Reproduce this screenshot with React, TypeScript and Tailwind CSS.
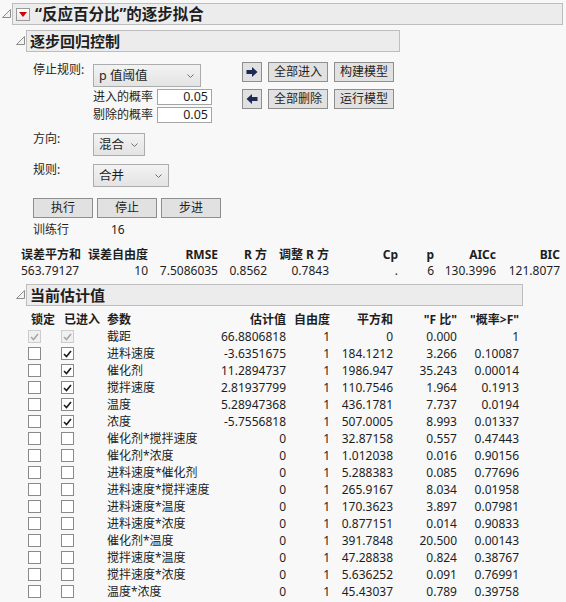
import React from 'react';

type Row = {
  name: string;
  est: string;
  df: string;
  ss: string;
  f: string;
  p: string;
  entered: boolean;
  disabled?: boolean;
};

const rows: Row[] = [
  { name: '截距', est: '66.8806818', df: '1', ss: '0', f: '0.000', p: '1', entered: true, disabled: true },
  { name: '进料速度', est: '-3.6351675', df: '1', ss: '184.1212', f: '3.266', p: '0.10087', entered: true },
  { name: '催化剂', est: '11.2894737', df: '1', ss: '1986.947', f: '35.243', p: '0.00014', entered: true },
  { name: '搅拌速度', est: '2.81937799', df: '1', ss: '110.7546', f: '1.964', p: '0.1913', entered: true },
  { name: '温度', est: '5.28947368', df: '1', ss: '436.1781', f: '7.737', p: '0.0194', entered: true },
  { name: '浓度', est: '-5.7556818', df: '1', ss: '507.0005', f: '8.993', p: '0.01337', entered: true },
  { name: '催化剂*搅拌速度', est: '0', df: '1', ss: '32.87158', f: '0.557', p: '0.47443', entered: false },
  { name: '催化剂*浓度', est: '0', df: '1', ss: '1.012038', f: '0.016', p: '0.90156', entered: false },
  { name: '进料速度*催化剂', est: '0', df: '1', ss: '5.288383', f: '0.085', p: '0.77696', entered: false },
  { name: '进料速度*搅拌速度', est: '0', df: '1', ss: '265.9167', f: '8.034', p: '0.01958', entered: false },
  { name: '进料速度*温度', est: '0', df: '1', ss: '170.3623', f: '3.897', p: '0.07981', entered: false },
  { name: '进料速度*浓度', est: '0', df: '1', ss: '0.877151', f: '0.014', p: '0.90833', entered: false },
  { name: '催化剂*温度', est: '0', df: '1', ss: '391.7848', f: '20.500', p: '0.00143', entered: false },
  { name: '搅拌速度*温度', est: '0', df: '1', ss: '47.28838', f: '0.824', p: '0.38767', entered: false },
  { name: '搅拌速度*浓度', est: '0', df: '1', ss: '5.636252', f: '0.091', p: '0.76991', entered: false },
  { name: '温度*浓度', est: '0', df: '1', ss: '45.43037', f: '0.789', p: '0.39758', entered: false },
];

const statHeads = ['误差平方和', '误差自由度', 'RMSE', 'R 方', '调整 R 方', 'Cp', 'p', 'AICc', 'BIC'];
const statVals = ['563.79127', '10', '7.5086035', '0.8562', '0.7843', '.', '6', '130.3996', '121.8077'];

const Disclosure = () => (
  <svg width="9" height="9" viewBox="0 0 9 9" className="shrink-0">
    <path d="M8.5 0.5 V8.5 H0.5 Z" fill="#f2f2f2" stroke="#8c8c8c" strokeWidth="1" />
  </svg>
);

const Chevron = () => (
  <svg width="7" height="4" viewBox="0 0 7 4">
    <path d="M0.5 0.5 L3.5 3.5 L6.5 0.5" fill="none" stroke="#707070" strokeWidth="1" />
  </svg>
);

const Dropdown = ({ text, className }: { text: string; className: string }) => (
  <div
    className={`flex h-[23px] items-center justify-between border border-[#acacac] bg-linear-to-b from-[#f3f3f3] to-[#e3e3e3] pl-[5px] pr-[6px] text-[12.5px] ${className}`}
  >
    <span>{text}</span>
    <Chevron />
  </div>
);

const Btn = ({ children, className = 'w-[60px]' }: { children: React.ReactNode; className?: string }) => (
  <button className={`flex h-[20px] items-center justify-center border border-[#8e8e8e] bg-[#e1e1e1] text-[12px] leading-none ${className}`}>
    {children}
  </button>
);

const Arrow = ({ left }: { left?: boolean }) => (
  <svg width="12" height="10" viewBox="0 0 12 10" className={left ? 'rotate-180' : ''}>
    <path d="M0.5 3 H6 V0 L11.5 5 L6 10 V7 H0.5 Z" fill="#1b2b55" />
  </svg>
);

const Check = ({ checked, disabled }: { checked: boolean; disabled?: boolean }) => (
  <div
    className={`flex h-[13px] w-[13px] items-center justify-center border ${
      disabled ? 'border-[#cccccc] bg-[#f0f0f0]' : 'border-[#8a8a8a] bg-white'
    }`}
  >
    {checked && (
      <svg width="9" height="8" viewBox="0 0 9 8">
        <path
          d="M1 4 L3.5 6.5 L8 1"
          fill="none"
          stroke={disabled ? '#a6a6a6' : '#1a1a1a'}
          strokeWidth="1.6"
        />
      </svg>
    )}
  </div>
);

export default function App() {
  return (
    <div className="h-[602px] w-[566px] overflow-hidden bg-[#f8f8f8] font-['Noto_Sans','Noto_Sans_CJK_SC',sans-serif] text-[12px] leading-[16px] text-[#1e1e1e]">
      {/* title */}
      <div className="flex items-start pt-[3px]">
        <div className="ml-[2px] mt-[6px]">
          <Disclosure />
        </div>
        <div className="ml-[1px] flex h-[22px] w-[551px] items-center border border-[#bdbdbd] bg-[#ececec] pl-[3px]">
          <div className="flex h-[13px] w-[14px] items-center justify-center border border-[#9a9a9a] bg-linear-to-b from-white to-[#e8e8e8]">
            <svg width="8" height="5" viewBox="0 0 8 5">
              <path d="M0 0 H8 L4 5 Z" fill="#d40000" />
            </svg>
          </div>
          <span className="ml-[5px] text-[15.5px] font-bold">“反应百分比”的逐步拟合</span>
        </div>
      </div>

      {/* stepwise control header */}
      <div className="mt-[5px] flex items-start">
        <div className="ml-[16px] mt-[6px]">
          <Disclosure />
        </div>
        <div className="ml-[1px] flex h-[22px] w-[374px] items-center border border-[#bdbdbd] bg-[#ececec] pl-[3px]">
          <span className="text-[15px] font-bold">逐步回归控制</span>
        </div>
      </div>

      {/* controls */}
      <div className="mt-[10px] flex pl-[33px]">
        <div className="w-[209px]">
          <div className="flex items-start">
            <span className="w-[60px]">停止规则:</span>
            <Dropdown text="p 值阈值" className="mt-[2px] w-[108px]" />
          </div>
          <div className="mt-[2px] flex items-center pl-[60px]">
            <span className="w-[64px]">进入的概率</span>
            <div className="flex h-[16px] w-[55px] items-center justify-end border border-[#a5a5a5] bg-white pr-[3px] text-[12.5px]">
              0.05
            </div>
          </div>
          <div className="mt-[2px] flex items-center pl-[60px]">
            <span className="w-[64px]">剔除的概率</span>
            <div className="flex h-[16px] w-[55px] items-center justify-end border border-[#a5a5a5] bg-white pr-[3px] text-[12.5px]">
              0.05
            </div>
          </div>
        </div>
        <div className="flex flex-col gap-[7px]">
          <div className="flex gap-[6px]">
            <Btn className="w-[20px]">
              <Arrow />
            </Btn>
            <Btn>全部进入</Btn>
            <Btn>构建模型</Btn>
          </div>
          <div className="flex gap-[6px]">
            <Btn className="w-[20px]">
              <Arrow left />
            </Btn>
            <Btn>全部删除</Btn>
            <Btn>运行模型</Btn>
          </div>
        </div>
      </div>

      <div className="mt-[8px] flex items-start pl-[33px]">
        <span className="w-[60px]">方向:</span>
        <Dropdown text="混合" className="mt-[2px] w-[52px]" />
      </div>
      <div className="mt-[6px] flex items-start pl-[33px]">
        <span className="w-[60px]">规则:</span>
        <Dropdown text="合并" className="mt-[2px] w-[76px]" />
      </div>

      <div className="mt-[11px] flex gap-[4px] pl-[33px]">
        <Btn>执行</Btn>
        <Btn>停止</Btn>
        <Btn>步进</Btn>
      </div>
      <div className="mt-[4px] flex pl-[33px]">
        <span className="w-[78px]">训练行</span>
        <span>16</span>
      </div>

      {/* stats */}
      <div className="ml-[21px] mt-[9px] grid grid-cols-[60px_67px_70px_49px_62px_69px_36px_62px_64px] whitespace-nowrap">
        {statHeads.map((h, i) => (
          <div key={h} className={`font-bold ${i === 0 ? 'text-left' : 'text-right'}`}>
            {h}
          </div>
        ))}
        {statVals.map((v, i) => (
          <div key={i} className={i === 0 ? 'text-left' : 'text-right'}>
            {v}
          </div>
        ))}
      </div>

      {/* current estimates header */}
      <div className="mt-[5px] flex items-start">
        <div className="ml-[16px] mt-[6px]">
          <Disclosure />
        </div>
        <div className="ml-[1px] flex h-[22px] w-[497px] items-center border border-[#bdbdbd] bg-[#ececec] pl-[3px]">
          <span className="text-[15px] font-bold">当前估计值</span>
        </div>
      </div>

      {/* estimates table */}
      <div className="ml-[28px] mt-[5px] grid grid-cols-[33px_46px_109px_70px_44px_63px_64px_62px] whitespace-nowrap">
        <div className="flex h-[17px] items-center pl-[3px] font-bold">锁定</div>
        <div className="flex h-[17px] items-center pl-[3px] font-bold">已进入</div>
        <div className="flex h-[17px] items-center font-bold">参数</div>
        <div className="flex h-[17px] items-center justify-end font-bold">估计值</div>
        <div className="flex h-[17px] items-center justify-end font-bold">自由度</div>
        <div className="flex h-[17px] items-center justify-end font-bold">平方和</div>
        <div className="flex h-[17px] items-center justify-end font-bold">"F 比"</div>
        <div className="flex h-[17px] items-center justify-end font-bold">"概率&gt;F"</div>
        {rows.map((r) => (
          <React.Fragment key={r.name}>
            <div className="flex h-[17px] items-center">
              <Check checked={!!r.disabled} disabled={r.disabled} />
            </div>
            <div className="flex h-[17px] items-center">
              <Check checked={r.entered} disabled={r.disabled} />
            </div>
            <div className="flex h-[17px] items-center">{r.name}</div>
            <div className="flex h-[17px] items-center justify-end">{r.est}</div>
            <div className="flex h-[17px] items-center justify-end">{r.df}</div>
            <div className="flex h-[17px] items-center justify-end">{r.ss}</div>
            <div className="flex h-[17px] items-center justify-end">{r.f}</div>
            <div className="flex h-[17px] items-center justify-end">{r.p}</div>
          </React.Fragment>
        ))}
      </div>
    </div>
  );
}
